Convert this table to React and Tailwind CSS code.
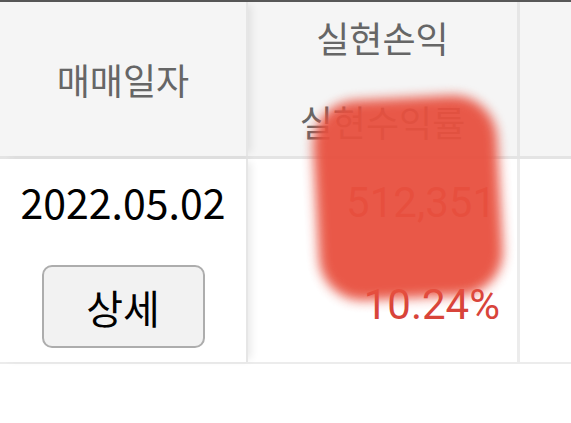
import React from 'react';

const kr = { fontFamily: '"Noto Sans CJK KR", "Noto Sans", sans-serif' };
const num = { fontFamily: 'Roboto, "Noto Sans CJK KR", sans-serif' };

export default function App() {
  return (
    <div className="relative w-[571px] h-[423px] bg-white overflow-hidden" style={kr}>
      <div className="border-t-2 border-[#585858]">
        {/* header */}
        <div className="flex h-[157px] bg-[#f5f5f5] border-b-[3px] border-[#e4e4e4]">
          <div className="relative z-10 w-[248px] shrink-0 flex items-center justify-center border-r-2 border-[#e6e6e6] bg-[#f5f5f5] shadow-[6px_0_8px_-3px_rgba(0,0,0,0.09)]">
            <span className="text-[36px] text-[#666]">매매일자</span>
          </div>
          <div className="w-[272px] shrink-0 flex flex-col items-center justify-center border-r-[3px] border-[#e6e6e6] text-[36px] leading-[84px] text-[#666]">
            <span>실현손익</span>
            <span>실현수익률</span>
          </div>
          <div className="flex-1" />
        </div>

        {/* body row */}
        <div className="flex h-[205px] border-b-2 border-[#ececec]">
          <div className="relative z-10 w-[248px] shrink-0 flex flex-col items-center pt-[18px] border-r-2 border-[#e6e6e6] bg-white shadow-[6px_0_8px_-3px_rgba(0,0,0,0.09)]">
            <span className="text-[41px] leading-[48px] text-black">2022.05.02</span>
            <button className="mt-[40px] w-[163px] h-[83px] rounded-[10px] border-2 border-[#adadad] bg-[#f2f2f2] text-[40px] text-black flex items-center justify-center" style={kr}>
              상세
            </button>
          </div>
          <div className="w-[272px] shrink-0 flex flex-col items-end pt-[20px] pr-[17px] gap-[54px] border-r-[3px] border-[#ececec] text-[42px] leading-[48px] text-[#d8443a]" style={num}>
            <span className="pr-[4px]">512,351</span>
            <span>10.24%</span>
          </div>
          <div className="flex-1" />
        </div>
      </div>

      {/* redaction blob */}
      <div className="absolute left-[316px] top-[98px] w-[184px] h-[200px] rounded-[44px] bg-[#e8503f] opacity-95 blur-[6px] -rotate-3" />
    </div>
  );
}
